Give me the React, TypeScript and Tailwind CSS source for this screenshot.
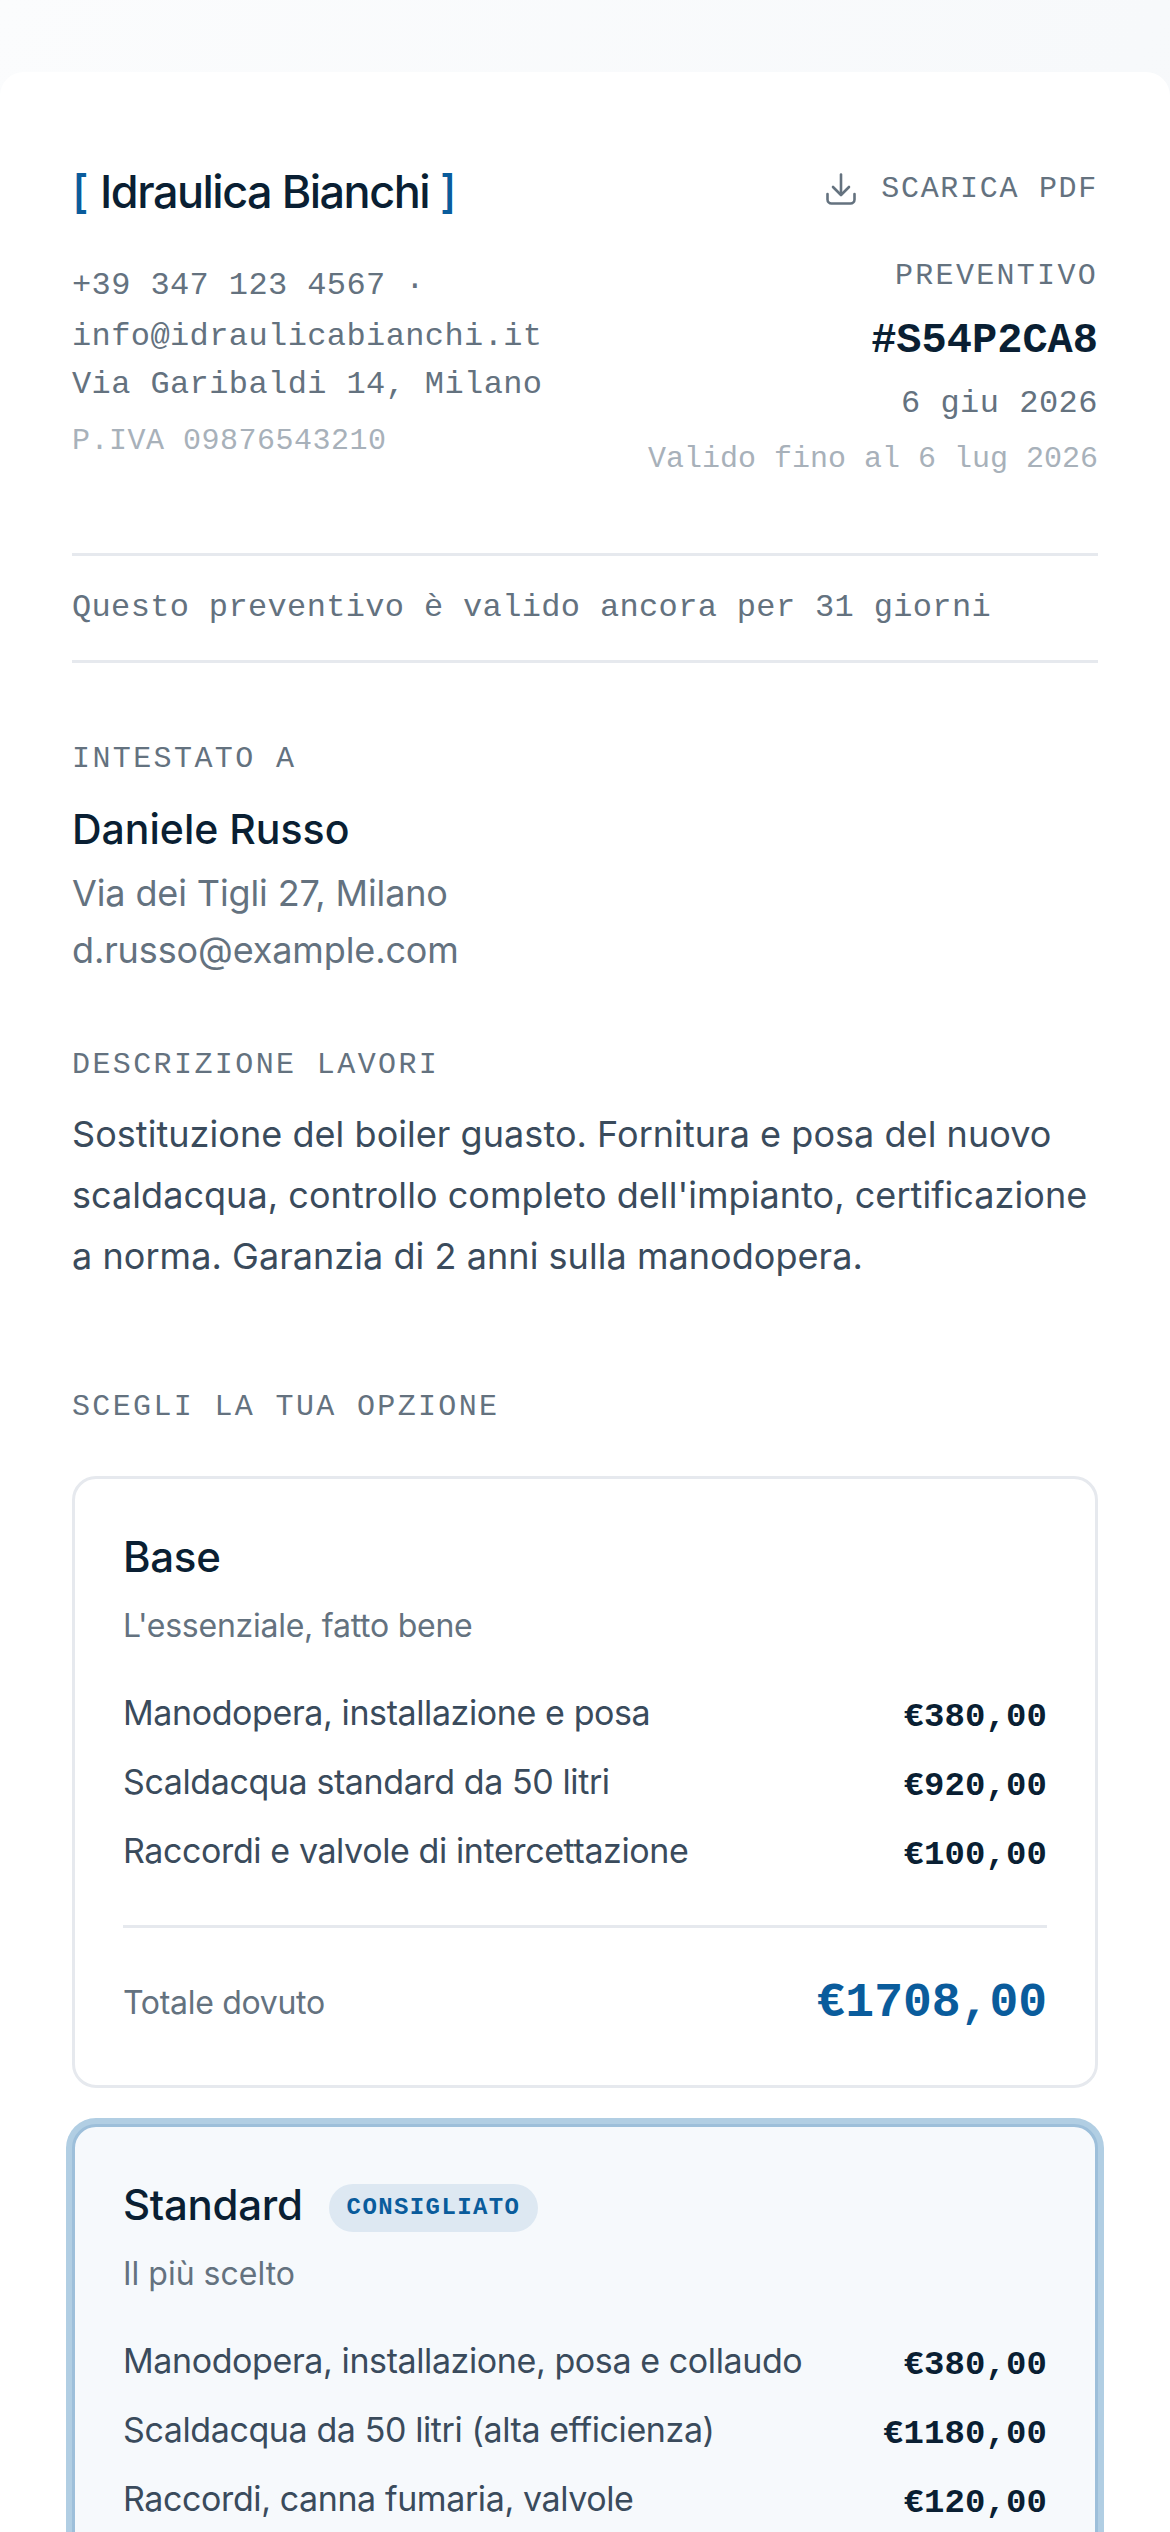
const mono = "font-['Liberation_Mono',monospace]"
const sans = "font-['Inter',sans-serif]"

function Row({ label, price }: { label: string; price: string }) {
  return (
    <div className="flex items-center justify-between h-[69px]">
      <span className="text-[34px] tracking-[-0.4px] text-[#3a4b5c]">{label}</span>
      <span className={`${mono} text-[34px] tracking-[0.1px] font-bold text-[#0a1f33] relative top-[5px]`}>{price}</span>
    </div>
  )
}

export default function App() {
  return (
    <div className={`h-[2532px] w-[1170px] overflow-hidden bg-gradient-to-br from-[#fbfcfd] to-[#f3f6f9] pt-[72px] ${sans}`}>
      <div className="h-full bg-white rounded-t-[24px] px-[72px] pt-[90px]">
        {/* header */}
        <div className="flex items-center justify-between h-[60px]">
          <div className="text-[45px] leading-[60px] tracking-[-1.5px] font-medium text-[#0a1f33] flex items-center">
            <span className="text-[#0a5c9c] mr-[13px]">[</span>
            Idraulica Bianchi
            <span className="text-[#0a5c9c] ml-[11px]">]</span>
          </div>
          <div className={`${mono} flex items-center gap-[25px] text-[30px] tracking-[1.7px] text-[#64727f] relative -top-[3px]`}>
            <svg width="30" height="32" viewBox="0 0 30 32" fill="none" stroke="currentColor" strokeWidth="2.6" strokeLinecap="round" strokeLinejoin="round">
              <path d="M15 1.5V21.5" />
              <path d="M7 14L15 22L23 14" />
              <path d="M1.5 21V26.5a4 4 0 0 0 4 4H24.5a4 4 0 0 0 4-4V21" />
            </svg>
            SCARICA PDF
          </div>
        </div>

        <div className={`${mono} flex justify-between mt-[34px]`}>
          <div className="text-[32px] tracking-[0.4px] text-[#64727f] pt-[6px]">
            <div className="leading-[48px]">+39 347 123 4567 ·</div>
            <div className="leading-[48px] mt-[3px]">info@idraulicabianchi.it</div>
            <div className="leading-[47px]">Via Garibaldi 14, Milano</div>
            <div className="leading-[48px] mt-[9px] text-[30px] tracking-[0.5px] text-[#a8b1ba]">P.IVA 09876543210</div>
          </div>
          <div className="text-right">
            <div className="text-[30px] tracking-[2.3px] leading-[40px] text-[#64727f]">PREVENTIVO</div>
            <div className="text-[42px] leading-[50px] mt-[20px] font-bold text-[#0a1f33]">#S54P2CA8</div>
            <div className="text-[32px] tracking-[0.5px] leading-[40px] mt-[18px] text-[#64727f]">6 giu 2026</div>
            <div className="text-[30px] leading-[40px] mt-[15px] text-[#a8b1ba]">Valido fino al 6 lug 2026</div>
          </div>
        </div>

        <div className={`${mono} mt-[74px] h-[110px] border-y-[3px] border-[#e6e9ee] flex items-center text-[32px] tracking-[0.35px] text-[#64727f]`}>
          Questo preventivo è valido ancora per 31 giorni
        </div>

        <div className={`${mono} mt-[76px] text-[30px] tracking-[2.4px] leading-[40px] text-[#64727f]`}>INTESTATO A</div>
        <div className="mt-[22px] text-[41px] leading-[56px] font-medium tracking-[0px] text-[#0a1f33]">Daniele Russo</div>
        <div className="mt-[8px] text-[36px] leading-[57px] tracking-[-0.12px] text-[#64727f]">
          <div>Via dei Tigli 27, Milano</div>
          <div>d.russo@example.com</div>
        </div>

        <div className={`${mono} mt-[66px] text-[30px] tracking-[2.4px] leading-[40px] text-[#64727f]`}>DESCRIZIONE LAVORI</div>
        <div className="mt-[19px] text-[36px] leading-[61px] tracking-[0.05px] text-[#3a4b5c]">
          Sostituzione del boiler guasto. Fornitura e posa del nuovo scaldacqua, controllo completo dell'impianto, certificazione a norma. Garanzia di 2 anni sulla manodopera.
        </div>

        <div className={`${mono} mt-[100px] text-[30px] tracking-[2.35px] leading-[40px] text-[#64727f]`}>SCEGLI LA TUA OPZIONE</div>

        {/* base */}
        <div className="mt-[49px] rounded-[24px] border-[3px] border-[#e6e9ee] px-[48px] pt-[50px] h-[612px]">
          <div className="text-[42px] leading-[56px] font-medium tracking-[-0.3px] text-[#0a1f33]">Base</div>
          <div className="mt-[20px] text-[32px] leading-[42px] tracking-[-0.25px] text-[#64727f]">L'essenziale, fatto bene</div>
          <div className="mt-[31px]">
            <Row label="Manodopera, installazione e posa" price="€380,00" />
            <Row label="Scaldacqua standard da 50 litri" price="€920,00" />
            <Row label="Raccordi e valvole di intercettazione" price="€100,00" />
          </div>
          <div className="mt-[40px] border-t-[3px] border-[#e6e9ee] pt-[47px] flex items-center justify-between">
            <span className="text-[32px] tracking-[-0.3px] text-[#64727f]">Totale dovuto</span>
            <span className={`${mono} text-[48px] font-bold leading-[56px] text-[#0a5c9c]`}>€1708,00</span>
          </div>
        </div>

        {/* standard */}
        <div className="mt-[36px] rounded-[24px] border-[3px] border-[#9dbfda] shadow-[0_0_0_6px_#b1cee3] bg-[#f6f9fc] px-[48px] pt-[50px] h-[700px]">
          <div className="flex items-center gap-[26px] h-[56px]">
            <span className="text-[42px] leading-[56px] font-medium tracking-[-0.3px] text-[#0a1f33]">Standard</span>
            <span className={`${mono} rounded-full bg-[#dde8f2] text-[#0a5c9c] text-[24px] tracking-[1.4px] font-bold h-[48px] px-[18px] flex items-center relative top-[3px]`}>CONSIGLIATO</span>
          </div>
          <div className="mt-[20px] text-[32px] leading-[42px] tracking-[0px] text-[#64727f]">Il più scelto</div>
          <div className="mt-[31px]">
            <Row label="Manodopera, installazione, posa e collaudo" price="€380,00" />
            <Row label="Scaldacqua da 50 litri (alta efficienza)" price="€1180,00" />
            <Row label="Raccordi, canna fumaria, valvole" price="€120,00" />
          </div>
        </div>
      </div>
    </div>
  )
}
